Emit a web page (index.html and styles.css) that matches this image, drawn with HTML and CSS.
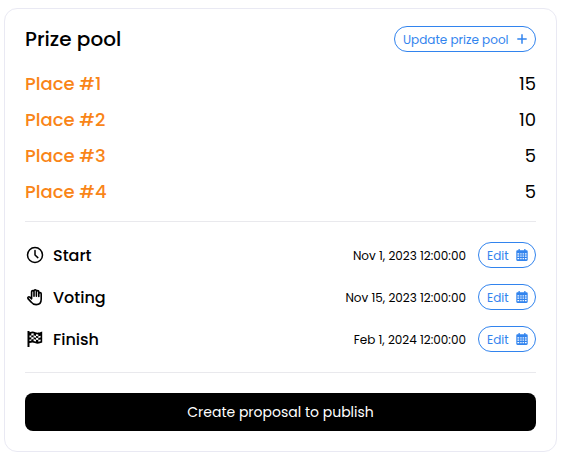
FILE: index.html
```html
<!DOCTYPE html>
<html lang="en">
<head>
<meta charset="utf-8">
<title>Prize pool</title>
<link rel="stylesheet" href="styles.css">
</head>
<body>
<svg class="sprite" aria-hidden="true">
  <symbol id="calendar" viewBox="0 0 12 12">
    <path fill="currentColor" fill-rule="evenodd" d="M2.500 0h1.300v1.300h4.400V0h1.300v1.300h1c.7 0 1.200.5 1.200 1.200v8.200c0 .7-.5 1.200-1.200 1.200h-9c-.7 0-1.200-.5-1.200-1.200V2.500c0-.7.5-1.200 1.200-1.200h1zM1.400 4.200v1.200h1.800V4.200zm2.900 0v1.200h1.300V4.200zm2.300 0v1.200h1.300V4.200zm2.300 0v1.200h1.700V4.200zM1.400 6.500v1.300h1.800V6.500zm2.900 0v1.300h1.300V6.500zm2.300 0v1.300h1.300V6.500zm2.300 0v1.300h1.700V6.500zM1.400 9v1.300h1.800V9zm2.900 0v1.300h1.300V9zm2.300 0v1.300h1.300V9zm2.300 0v1.300h1.700V9z"/>
  </symbol>
</svg>
<main class="card">
  <header class="header">
    <h1 class="title">Prize pool</h1>
    <button class="pill pill-wide"><span>Update prize pool</span>
      <svg class="plus" viewBox="0 0 10 10"><path d="M5 .3v9.400M.3 5h9.400" stroke="currentColor" stroke-width="1.500"/></svg>
    </button>
  </header>
  <dl class="places">
    <div class="place"><dt>Place #1</dt><dd>15</dd></div>
    <div class="place"><dt>Place #2</dt><dd>10</dd></div>
    <div class="place"><dt>Place #3</dt><dd>5</dd></div>
    <div class="place"><dt>Place #4</dt><dd>5</dd></div>
  </dl>
  <section class="dates">
    <div class="row">
      <svg class="icon" viewBox="0 0 20 20" fill="none" stroke="currentColor" stroke-width="1.500" stroke-linecap="round" stroke-linejoin="round"><circle cx="10" cy="10" r="7.500"/><path d="M10 5.500V10l2.800 2.600"/></svg>
      <span class="label">Start</span><time>Nov 1, 2023 12:00:00</time>
      <button class="pill"><span>Edit</span><svg class="cal"><use href="#calendar"/></svg></button>
    </div>
    <div class="row">
      <svg class="icon" viewBox="0 0 20 20" fill="none" stroke="currentColor" stroke-width="1.600" stroke-linecap="round" stroke-linejoin="round"><path d="M6.600 11.500V4.800a1.200 1.200 0 0 1 2.400 0V9.300M9 4.800V3.900a1.200 1.200 0 0 1 2.400 0V9.300M11.400 4.800a1.200 1.200 0 0 1 2.400 0V9.500M13.800 6.800a1.200 1.200 0 0 1 2.400 0v5.400c0 3.200-2 5.400-5 5.400-2.400 0-3.900-.9-5-2.500L3 11.600c-.8-1.200.7-2.400 1.800-1.400l1.800 1.600"/></svg>
      <span class="label">Voting</span><time>Nov 15, 2023 12:00:00</time>
      <button class="pill"><span>Edit</span><svg class="cal"><use href="#calendar"/></svg></button>
    </div>
    <div class="row">
      <svg class="icon" viewBox="0 0 20 20" fill="currentColor" fill-rule="evenodd"><path d="M2.500 2h2v1.200C7.500 2 8.800 2.500 10.300 3.200c2 .8 3.700.6 6.900-.7v11c-2.600 1.300-5.100 1.500-7.300.6-1.900-.8-3.100-.8-5.400 0V18h-2zM6.300 4.600v1.900l2.300-.3V4.300zM11 5.200v1.800l2.300.2V5.400zM8.600 6.200v2.100l2.400.4V7zM13.300 7.200v1.900l2.300-.5V6.700zM6.300 8.300v2.100l2.300-.3V8.300zM11 8.700v2.100l2.300.2V9.100zM8.600 10.100v1.900l2.400.6v-1.800zM13.300 11v1.700l2.300-.5V10.500zM4.500 6.500v1.900l1.800-.1V6.500zM4.500 10.500v1.500l1.800-.3v-1.300z"/></svg>
      <span class="label">Finish</span><time>Feb 1, 2024 12:00:00</time>
      <button class="pill"><span>Edit</span><svg class="cal"><use href="#calendar"/></svg></button>
    </div>
  </section>
  <button class="publish">Create proposal to publish</button>
</main>
</body>
</html>
```
FILE: styles.css
```css
* { box-sizing: border-box; }
body {
  margin: 0;
  padding: 8px 8px 0 4px;
  background: #fff;
  color: #000;
  font-family: Poppins, Inter, "Liberation Sans", sans-serif;
}
.sprite { position: absolute; width: 0; height: 0; }
.card {
  width: 553px;
  height: 444px;
  padding: 17px 20px 20px;
  border: 1px solid #e9e9f3;
  border-radius: 13px;
}
.header { display: flex; align-items: center; justify-content: space-between; height: 26px; }
.title { margin: 0; font-size: 20px; line-height: 26px; font-weight: 500; }
button { font: inherit; }
.pill {
  display: flex;
  align-items: center;
  justify-content: space-between;
  width: 58px;
  height: 26px;
  padding: 0 7px 0 8px;
  border: 1px solid #3284ee;
  border-radius: 13px;
  background: #fff;
  color: #3284ee;
  font-size: 12px;
  line-height: 24px;
  white-space: nowrap;
}
.pill span { padding-top: 2px; line-height: 22px; }
.pill-wide { width: 142px; padding-right: 8px; }
.plus { width: 10px; height: 10px; }
.cal { width: 12px; height: 12px; }
.places { margin: 14px 0 0; padding-bottom: 11px; border-bottom: 1px solid #e9e9ed; }
.place { display: flex; justify-content: space-between; height: 36px; font-size: 18px; line-height: 36px; }
.place dt { color: #f98518; font-weight: 500; }
.place dd { margin: 0; }
.dates {
  display: flex;
  flex-direction: column;
  gap: 16px;
  padding: 20px 0;
  border-bottom: 1px solid #e9e9ed;
}
.row { display: flex; align-items: center; height: 26px; }
.icon { width: 20px; height: 20px; margin-right: 8px; }
.label { font-size: 16px; font-weight: 500; }
time { margin-left: auto; margin-right: 12px; padding-top: 2px; font-size: 12px; white-space: nowrap; }
.publish {
  display: block;
  width: 100%;
  height: 38px;
  margin-top: 20px;
  padding: 0;
  border: 0;
  border-radius: 8px;
  background: #000;
  color: #fff;
  font-size: 14px;
}
```
